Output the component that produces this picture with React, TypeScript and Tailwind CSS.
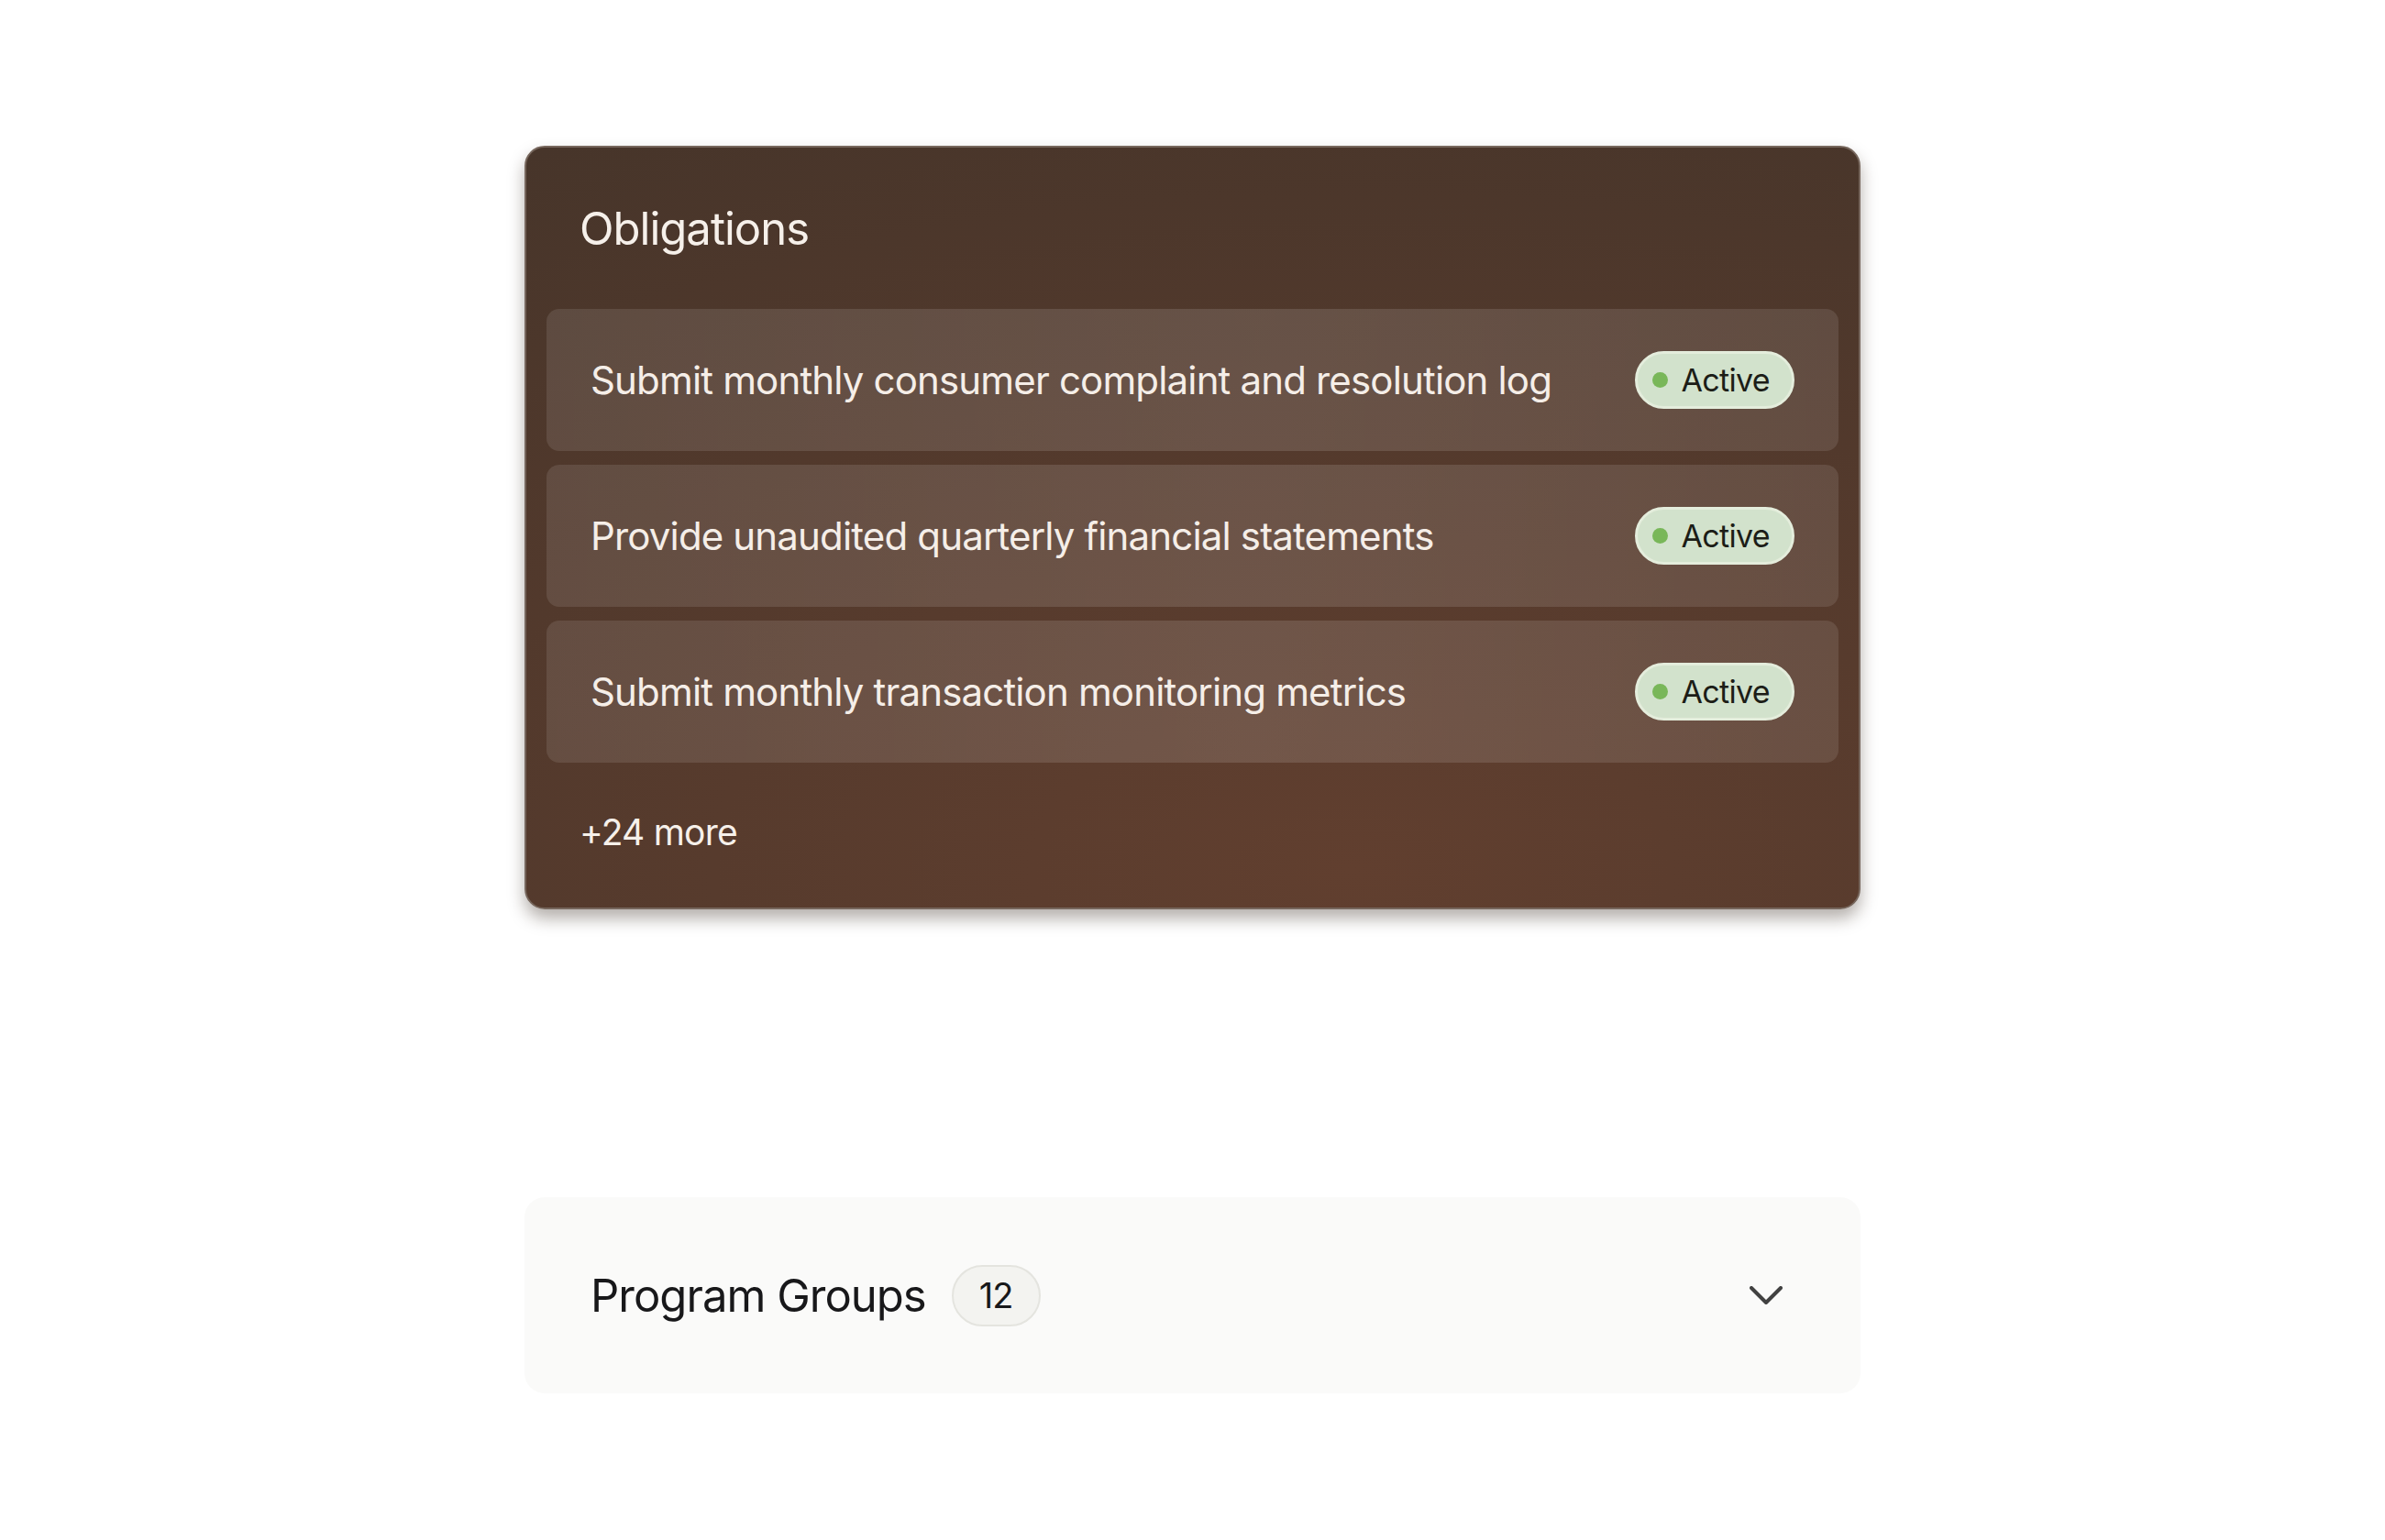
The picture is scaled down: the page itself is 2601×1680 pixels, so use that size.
import React from 'react';

const obligations = [
  'Submit monthly consumer complaint and resolution log',
  'Provide unaudited quarterly financial statements',
  'Submit monthly transaction monitoring metrics',
];

const StatusBadge: React.FC<{ label: string }> = ({ label }) => (
  <div className="flex items-center gap-[15px] h-[63px] pl-[16px] pr-[24px] rounded-full border-[3px] border-[#e4eddc] bg-[#d2e2cc]">
    <span className="w-[17px] h-[17px] rounded-full bg-[#79b759]" />
    <span className="text-[34px] leading-none tracking-[-0.02em] text-[#1c1d17]">{label}</span>
  </div>
);

const App: React.FC = () => {
  return (
    <div
      className="min-h-screen bg-white pt-[159px] pb-[160px]"
      style={{ fontFamily: 'Inter, "Noto Sans", "Liberation Sans", sans-serif' }}
    >
      {/* Obligations card */}
      <div className="w-[1457px] mx-auto rounded-[22px] border-2 border-[#76665c] bg-[radial-gradient(120%_110%_at_62%_95%,#613f2f_0%,#573b2d_40%,#47352a_100%)] shadow-[0_10px_18px_rgba(40,25,15,0.35)] overflow-hidden">
        <div className="h-[176px] flex items-center px-[58px]">
          <h2 className="text-[49px] leading-none font-normal tracking-[-0.02em] text-[#f6f0ea]">Obligations</h2>
        </div>

        <div className="px-[22px] flex flex-col gap-[15px]">
          {obligations.map(item => (
            <div
              key={item}
              className="h-[155px] rounded-[14px] bg-[linear-gradient(90deg,rgba(255,255,255,0.1),rgba(255,255,255,0.13)_55%,rgba(255,255,255,0.1))] flex items-center justify-between px-[48px]"
            >
              <span className="text-[42px] leading-none tracking-[-0.02em] text-[#f5eee8]">{item}</span>
              <StatusBadge label="Active" />
            </div>
          ))}
        </div>

        <div className="h-[158px] pb-[8px] flex items-center px-[58px]">
          <span className="text-[39px] leading-none tracking-[-0.02em] text-[#f6f0ea]">+24 more</span>
        </div>
      </div>

      {/* Program groups */}
      <div className="w-[1457px] mx-auto mt-[314px] h-[214px] rounded-[22px] bg-[#fafaf9] flex items-center justify-between pl-[72px] pr-[85px]">
        <div className="flex items-center">
          <span className="text-[49px] leading-none tracking-[-0.02em] text-[#18181a]">Program Groups</span>
          <span className="ml-[28px] h-[67px] min-w-[97px] px-[24px] rounded-full bg-[#f3f3f0] border-2 border-[#e4e4df] flex items-center justify-center text-[38px] leading-none tracking-[-0.02em] text-[#18181a]">
            12
          </span>
        </div>
        <svg width="36" height="20" viewBox="0 0 36 20" fill="none">
          <polyline
            points="2,2 18,18 34,2"
            stroke="#414141"
            strokeWidth="4"
            strokeLinecap="round"
            strokeLinejoin="round"
          />
        </svg>
      </div>
    </div>
  );
};

export default App;
